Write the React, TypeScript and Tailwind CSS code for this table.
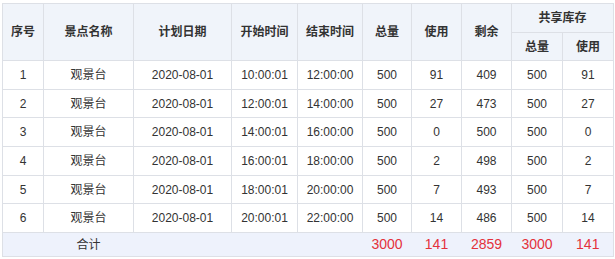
const rows = [
  { no: 1, start: '10:00:01', end: '12:00:00', used: 91, left: 409 },
  { no: 2, start: '12:00:01', end: '14:00:00', used: 27, left: 473 },
  { no: 3, start: '14:00:01', end: '16:00:00', used: 0, left: 500 },
  { no: 4, start: '16:00:01', end: '18:00:00', used: 2, left: 498 },
  { no: 5, start: '18:00:01', end: '20:00:00', used: 7, left: 493 },
  { no: 6, start: '20:00:01', end: '22:00:00', used: 14, left: 486 },
]

const th = 'border border-[#dde0e6] bg-[#f0f4fa] font-bold text-[12px] text-[#333] text-center'
const td = 'border border-[#dde0e6] text-center h-[28.7px] p-0'
const ft = 'text-center text-[14px] text-[#e4313b] p-0'

export default function App() {
  return (
    <div className="bg-white w-[615px] h-[259px] pl-[2px] pt-[3px]" style={{ fontFamily: '"Liberation Sans", "Noto Sans CJK SC", sans-serif' }}>
      <table className="border-collapse w-[611px] table-fixed text-[12px] text-[#333]">
        <colgroup>
          <col className="w-[41px]" />
          <col className="w-[90px]" />
          <col className="w-[98px]" />
          <col className="w-[66px]" />
          <col className="w-[65px]" />
          <col className="w-[49px]" />
          <col className="w-[50px]" />
          <col className="w-[50px]" />
          <col className="w-[51px]" />
          <col className="w-[51px]" />
        </colgroup>
        <thead>
          <tr className="h-[29px]">
            <th rowSpan={2} className={th}>序号</th>
            <th rowSpan={2} className={th}>景点名称</th>
            <th rowSpan={2} className={th}>计划日期</th>
            <th rowSpan={2} className={th}>开始时间</th>
            <th rowSpan={2} className={th}>结束时间</th>
            <th rowSpan={2} className={th}>总量</th>
            <th rowSpan={2} className={th}>使用</th>
            <th rowSpan={2} className={th}>剩余</th>
            <th colSpan={2} className={th}>共享库存</th>
          </tr>
          <tr className="h-[28px]">
            <th className={th}>总量</th>
            <th className={th}>使用</th>
          </tr>
        </thead>
        <tbody>
          {rows.map((r) => (
            <tr key={r.no}>
              <td className={td}>{r.no}</td>
              <td className={td}>观景台</td>
              <td className={td}>2020-08-01</td>
              <td className={td}>{r.start}</td>
              <td className={td}>{r.end}</td>
              <td className={td}>500</td>
              <td className={td}>{r.used}</td>
              <td className={td}>{r.left}</td>
              <td className={td}>500</td>
              <td className={td}>{r.used}</td>
            </tr>
          ))}
          <tr className="h-[24px] bg-[#eef2fc] border border-[#dde0e6]">
            <td className="p-0" />
            <td className="text-center p-0 text-[12px] text-[#333]">合计</td>
            <td className="p-0" />
            <td className="p-0" />
            <td className="p-0" />
            <td className={ft}>3000</td>
            <td className={ft}>141</td>
            <td className={ft}>2859</td>
            <td className={ft}>3000</td>
            <td className={ft}>141</td>
          </tr>
        </tbody>
      </table>
    </div>
  )
}
